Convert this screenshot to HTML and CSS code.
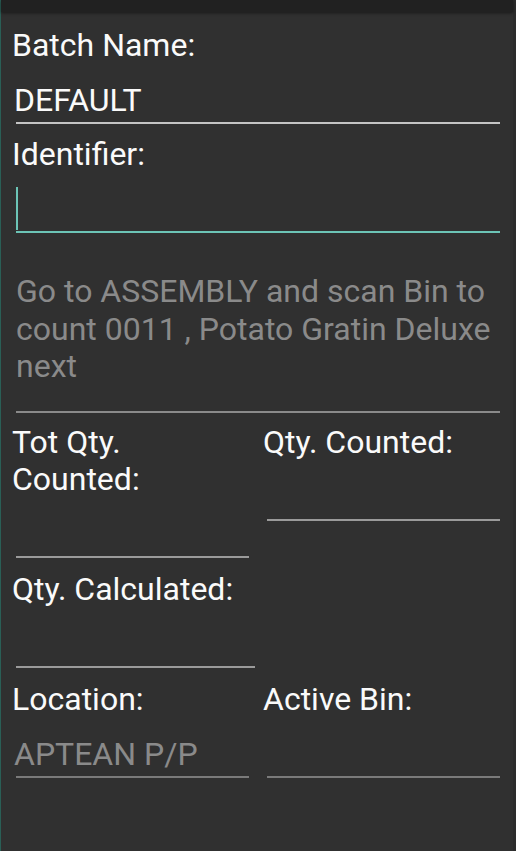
FILE: index.html
```html
<!DOCTYPE html>
<html lang="en">
<head>
    <meta charset="UTF-8">
    <title>Bin Count</title>
    <link rel="stylesheet" href="styles.css">
</head>
<body>
<div id="screen">
    <div class="topbar"></div>
    <div class="form">
        <div class="field full">
            <div class="label">Batch Name:</div>
            <div class="input light">DEFAULT</div>
        </div>
        <div class="field full">
            <div class="label">Identifier:</div>
            <div class="input focused"><span class="caret"></span></div>
        </div>
        <div class="hint">Go to ASSEMBLY and scan Bin to count 0011 , Potato Gratin Deluxe next</div>
        <div class="row">
            <div class="field">
                <div class="label">Tot Qty.<br>Counted:</div>
                <div class="input"></div>
            </div>
            <div class="field">
                <div class="label">Qty. Counted:</div>
                <div class="input"></div>
            </div>
        </div>
        <div class="row">
            <div class="field wide">
                <div class="label">Qty. Calculated:</div>
                <div class="input"></div>
            </div>
        </div>
        <div class="row">
            <div class="field">
                <div class="label">Location:</div>
                <div class="input dim muted">APTEAN P/P</div>
            </div>
            <div class="field">
                <div class="label">Active Bin:</div>
                <div class="input dim"></div>
            </div>
        </div>
    </div>
</div>
</body>
</html>
```

FILE: styles.css
```css
html * {
    box-sizing: border-box;
}

body {
    margin: 0;
    background: #303030;
    color: #fafafa;
    font-family: Roboto, "Noto Sans", sans-serif;
    font-size: 32px;
}

#screen {
    min-height: 851px;
    border-left: 1px solid #2a5f56;
    border-right: 3px solid #2c2c2c;
}

.topbar {
    height: 12px;
    background: #212121;
    box-shadow: 0 1px 3px rgba(0, 0, 0, 0.5);
}

.form {
    padding: 15px 13px 0 11px;
}

.field {
    margin-bottom: 12px;
}

.row .field {
    margin-bottom: 13px;
}

.label {
    line-height: 37.5px;
}

.input {
    height: 59.5px;
    margin-left: 4px;
    padding: 17px 0 3px;
    line-height: 37.5px;
    text-indent: -2px;
    border-bottom: 2px solid #9a9a9a;
}

.input.light {
    border-bottom-color: #c4c4c4;
}

.input.focused {
    border-bottom-color: #6cc4b6;
}

.input.dim {
    border-bottom-color: #7a7a7a;
}

.muted {
    color: #8a8a8a;
}

.caret {
    display: block;
    width: 2px;
    height: 43px;
    margin-top: -4px;
    background: #6cc4b6;
}

.hint {
    margin: 40px 0 11px 4px;
    padding-bottom: 25px;
    line-height: 37.5px;
    color: #8a8a8a;
    border-bottom: 2px solid #8a8a8a;
}

.row {
    display: grid;
    grid-template-columns: 237px 237px;
    column-gap: 14px;
    align-items: start;
}

.field.wide {
    width: 243px;
}
```
